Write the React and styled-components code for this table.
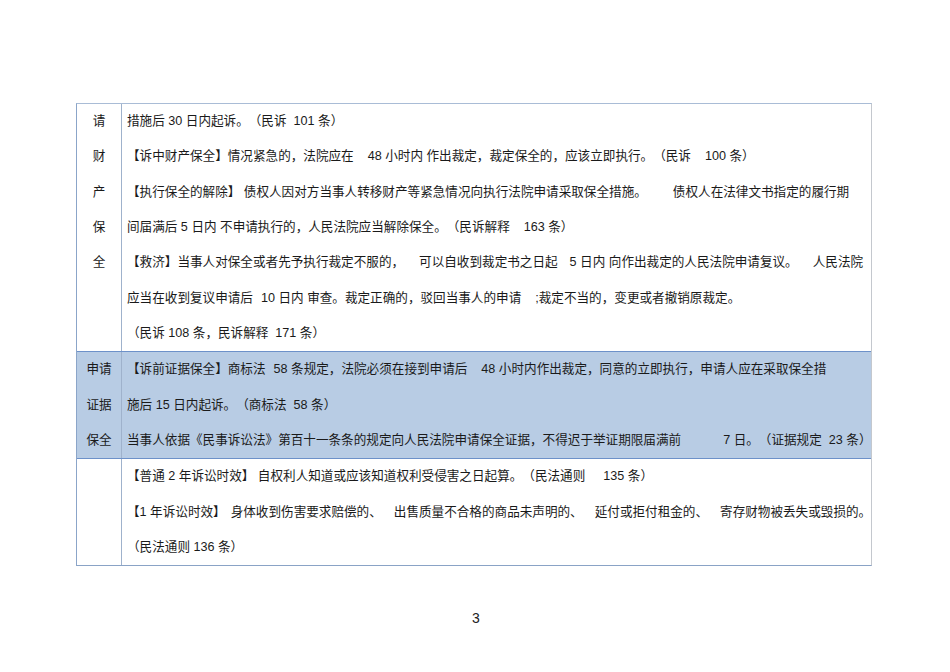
import React from "react";
import styled, { createGlobalStyle } from "styled-components";

const Global = createGlobalStyle`
  html, body { margin: 0; padding: 0; background: #ffffff; }
  body {
    font-family: "Liberation Sans", "Noto Sans CJK SC", sans-serif;
    color: #1a1a1a;
    text-spacing-trim: space-all;
  }
`;

const Page = styled.div`
  width: 950px;
  height: 672px;
  box-sizing: border-box;
  padding: 103px 0 0 76px;
  display: flex;
  flex-direction: column;
`;

const Frame = styled.div`
  width: 794px;
  display: flex;
  border-right: 2px solid #5f87c4;
  padding-right: 2px;
  box-sizing: border-box;
`;

const Table = styled.div`
  flex: 1;
  display: flex;
  flex-direction: column;
  border-left: 1px solid #8ba5c9;
  border-top: 1px solid #a9bcd6;
  border-right: 1px solid #c4c8ce;
  border-bottom: 1px solid #8aa3c6;
`;

const Row = styled.div`
  display: grid;
  grid-template-columns: 45px 1fr;
  background: ${(p) => (p.$hl ? "#b8cce4" : "#ffffff")};
  border-top: ${(p) => (p.$sep ? "1.5px solid #6d91c9" : "none")};
`;

const Label = styled.div`
  border-right: 1px solid #9fb2cc;
  display: flex;
  flex-direction: column;
  align-items: center;
  font-size: 12.6px;
  line-height: 35.33px;
`;

const Body = styled.div`
  padding-left: 5px;
  font-size: 12.6px;
  line-height: 35.33px;
`;

const Line = styled.div`
  white-space: pre;
`;

const Gap = styled.span`
  display: inline-block;
  width: ${(p) => p.$w}px;
`;

const PageNum = styled.div`
  margin-top: 44px;
  width: 800px;
  text-align: center;
  font-size: 14px;
  color: #222;
`;

export default function App() {
  return (
    <>
      <Global />
      <Page>
        <Frame>
          <Table>
            <Row>
              <Label>
                <span>请</span>
                <span>财</span>
                <span>产</span>
                <span>保</span>
                <span>全</span>
              </Label>
              <Body>
                <Line>措施后 30 日内起诉。（民诉  101 条）</Line>
                <Line>
                  【诉中财产保全】情况紧急的，法院应在<Gap $w={14} />48 小时内 作出裁定，裁定保全的，应该立即执行。（民诉<Gap $w={14} />100 条）
                </Line>
                <Line>
                  【执行保全的解除】 债权人因对方当事人转移财产等紧急情况向执行法院申请采取保全措施。<Gap $w={26} />债权人在法律文书指定的履行期
                </Line>
                <Line>
                  间届满后 5 日内 不申请执行的，人民法院应当解除保全。（民诉解释<Gap $w={14} />163 条）
                </Line>
                <Line>
                  【救济】当事人对保全或者先予执行裁定不服的，<Gap $w={15} />可以自收到裁定书之日起<Gap $w={12} />5 日内 向作出裁定的人民法院申请复议。<Gap $w={15} />人民法院
                </Line>
                <Line>
                  应当在收到复议申请后<Gap $w={8} />10 日内 审查。裁定正确的，驳回当事人的申请<Gap $w={14} />;裁定不当的，变更或者撤销原裁定。
                </Line>
                <Line>（民诉 108 条，民诉解释  171 条）</Line>
              </Body>
            </Row>
            <Row $hl $sep>
              <Label>
                <span>申请</span>
                <span>证据</span>
                <span>保全</span>
              </Label>
              <Body>
                <Line>
                  【诉前证据保全】商标法<Gap $w={8} />58 条规定，法院必须在接到申请后<Gap $w={14} />48 小时内作出裁定，同意的立即执行，申请人应在采取保全措
                </Line>
                <Line>施后 15 日内起诉。（商标法  58 条）</Line>
                <Line>
                  当事人依据《民事诉讼法》第百十一条条的规定向人民法院申请保全证据，不得迟于举证期限届满前<Gap $w={42} />7 日。（证据规定  23 条）
                </Line>
              </Body>
            </Row>
            <Row $sep>
              <Label />
              <Body>
                <Line>
                  【普通 2 年诉讼时效】 自权利人知道或应该知道权利受侵害之日起算。（民法通则<Gap $w={18} />135 条）
                </Line>
                <Line>
                  【1 年诉讼时效】<Gap $w={5} />身体收到伤害要求赔偿的、<Gap $w={12} />出售质量不合格的商品未声明的、<Gap $w={12} />延付或拒付租金的、<Gap $w={12} />寄存财物被丢失或毁损的。
                </Line>
                <Line>（民法通则 136 条）</Line>
              </Body>
            </Row>
          </Table>
        </Frame>
        <PageNum>3</PageNum>
      </Page>
    </>
  );
}
